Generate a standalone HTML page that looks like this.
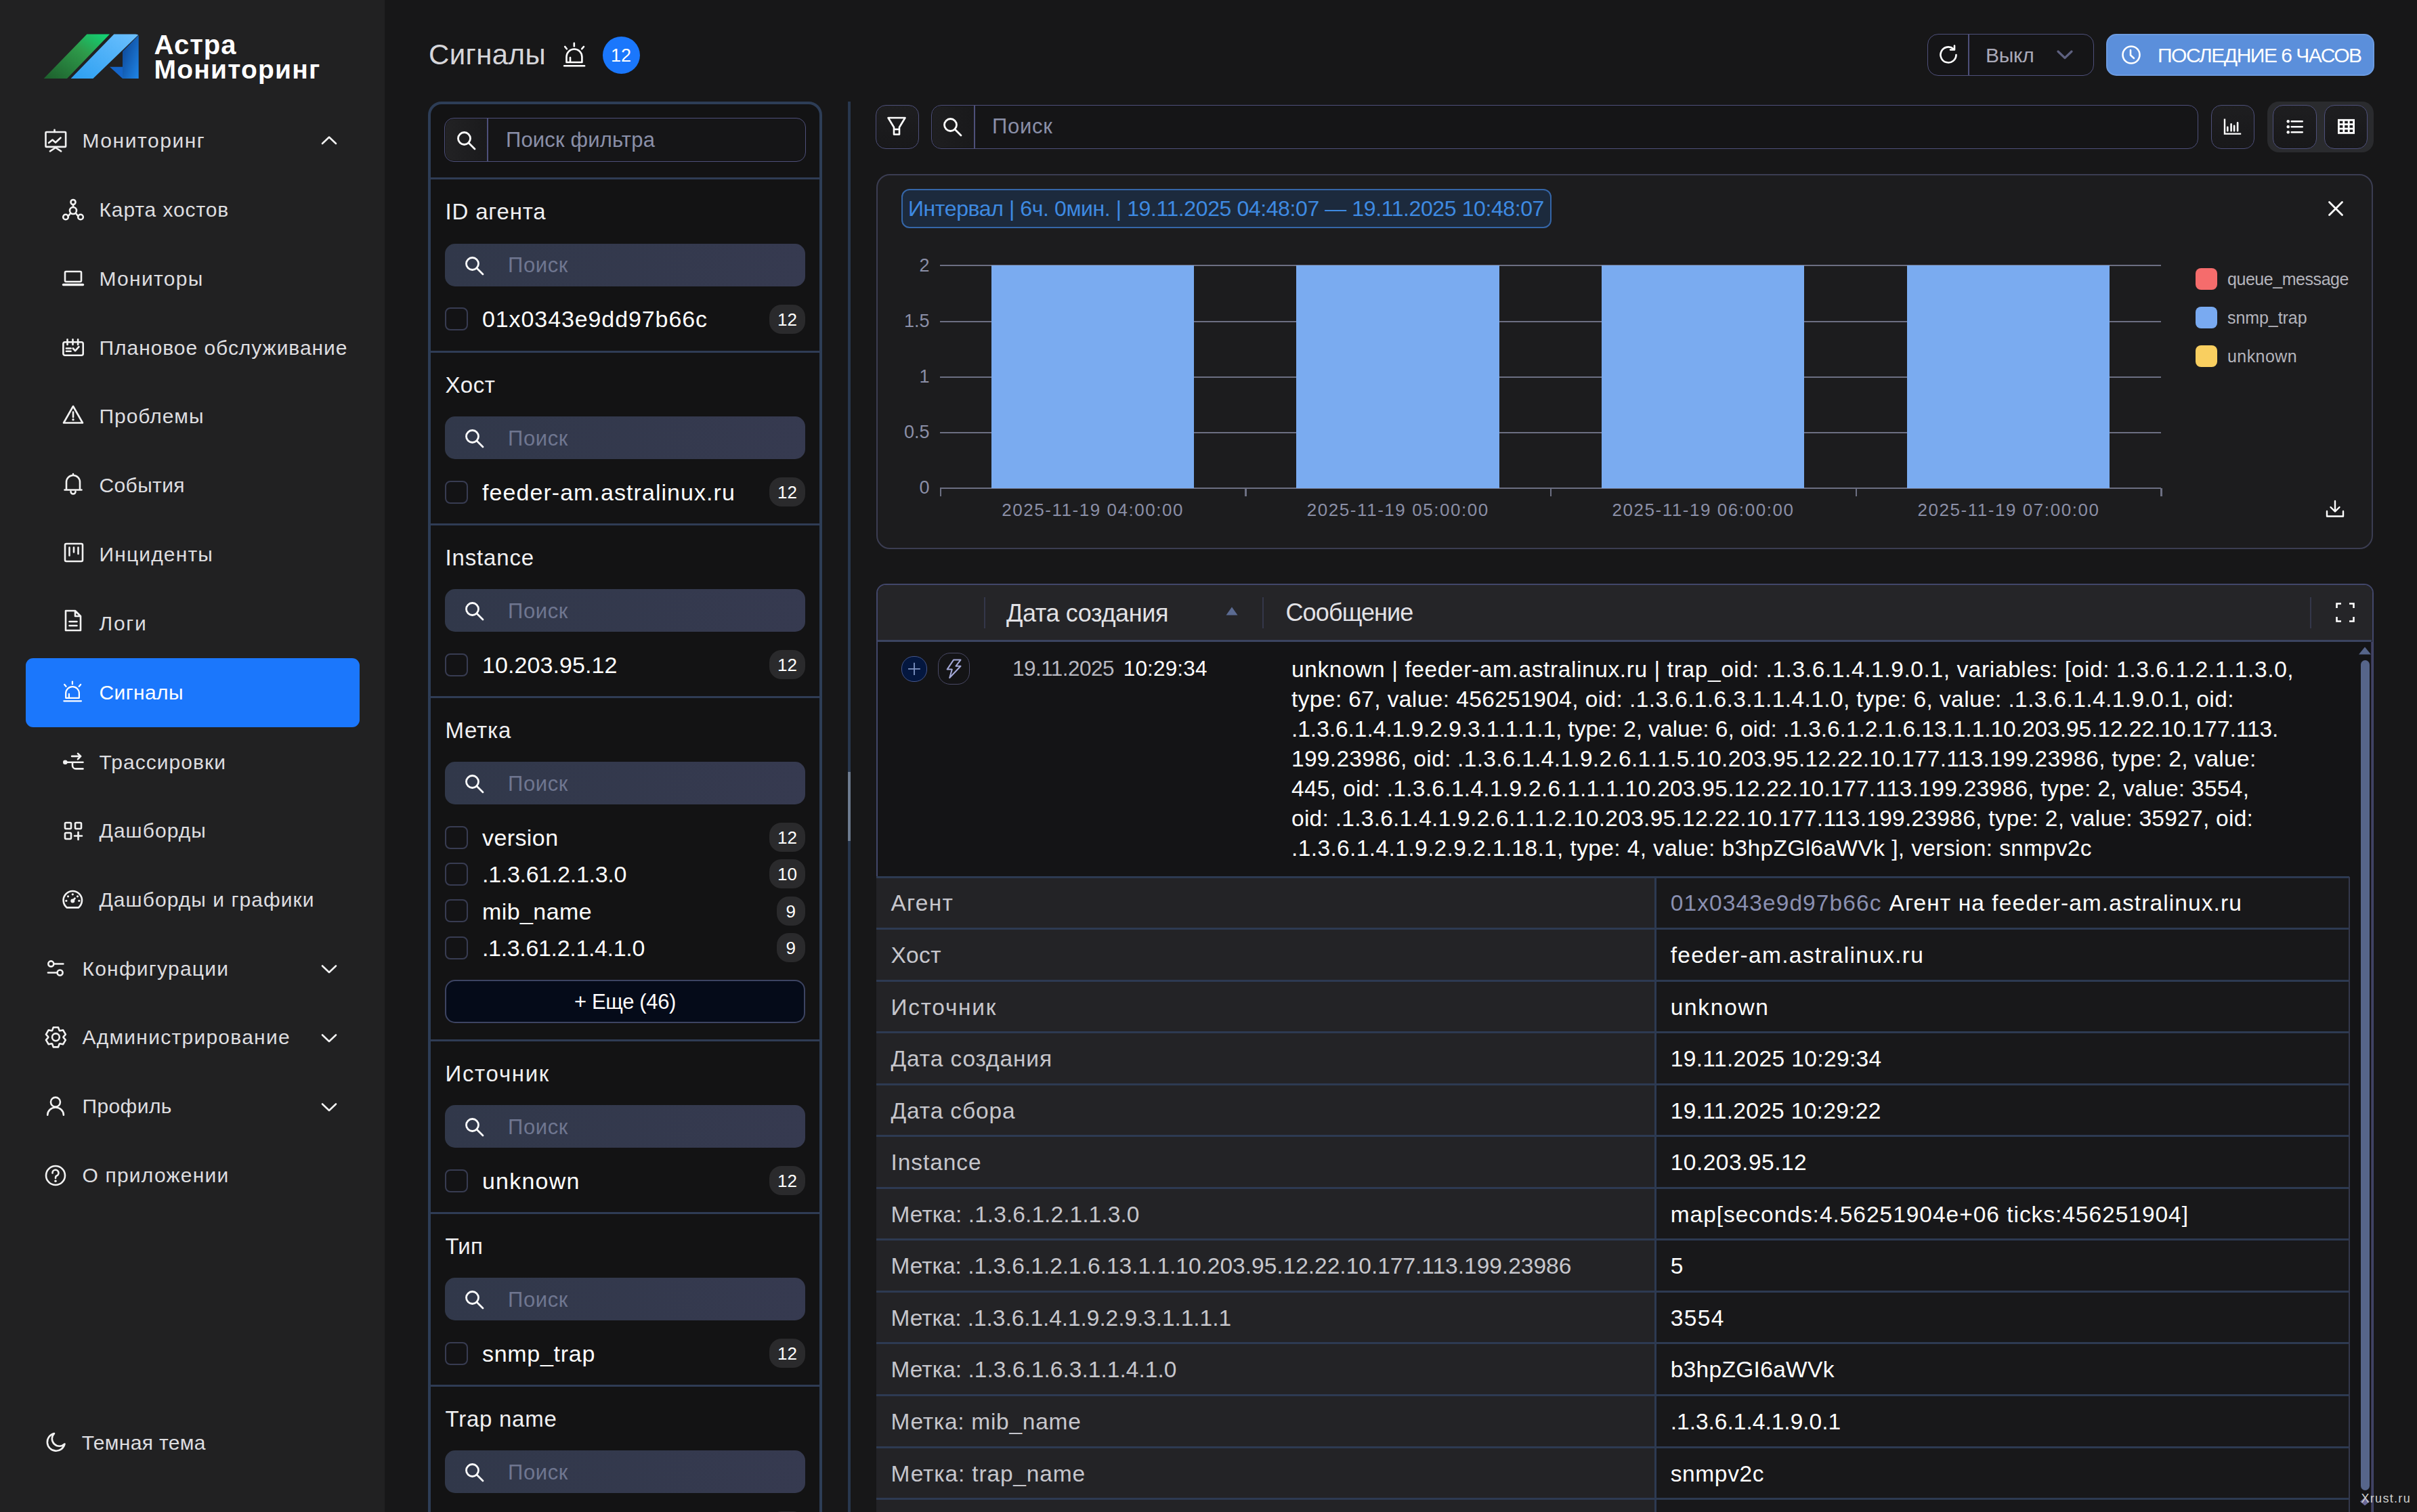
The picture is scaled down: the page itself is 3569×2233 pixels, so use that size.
<!DOCTYPE html>
<html><head><meta charset="utf-8"><style>
html,body{margin:0;padding:0;background:#171718;}
#root{position:relative;width:3569px;height:2233px;overflow:hidden;background:#171718;font-family:"Liberation Sans", sans-serif;}
.t{position:absolute;white-space:pre;line-height:1;font-family:"Liberation Sans", sans-serif;}
.r{position:absolute;box-sizing:border-box;}
svg.r{overflow:visible;}
</style></head><body><div id="root">
<div class="r" style="left:0.0px;top:0.0px;width:568.0px;height:2233.0px;background:#212122;"></div>
<svg class="r" style="left:60.0px;top:46.0px;" width="150" height="76" viewBox="0 0 150 76">
<defs>
<linearGradient id="lg1" x1="0" y1="1" x2="1" y2="0"><stop offset="0" stop-color="#1d5e2c"/><stop offset="0.6" stop-color="#2e9a4a"/><stop offset="1" stop-color="#10d878"/></linearGradient>
<linearGradient id="lg2" x1="0" y1="1" x2="1" y2="0"><stop offset="0" stop-color="#2c9ff0"/><stop offset="1" stop-color="#6cc0ff"/></linearGradient>
<linearGradient id="lg3" x1="0" y1="0" x2="1" y2="1"><stop offset="0" stop-color="#0b3f8c"/><stop offset="1" stop-color="#1f86e8"/></linearGradient>
</defs>
<path d="M4.6 70 L39 70 L102 4.5 Q100 4.5 97 4.5 L68.3 4.5 Z" fill="url(#lg1)"/>
<path d="M44.6 70 L77.4 70 L143.8 6 Q144 4.5 140 4.5 L108.3 4.5 Z" fill="url(#lg2)"/>
<path d="M121 70 L144.7 70 L144.7 6 L121 30 Z" fill="url(#lg3)"/>
<path d="M102 52.7 L121 52.7 L121 70 Z" fill="#1565c8"/>
</svg>
<div class="t" style="left:227.5px;top:46.2px;font-size:40px;color:#ffffff;font-weight:700;letter-spacing:1.02px">Астра</div>
<div class="t" style="left:227.5px;top:83.0px;font-size:39px;color:#ffffff;font-weight:700;letter-spacing:1.21px">Мониторинг</div>
<svg class="r" style="left:66.0px;top:190.0px;" width="34" height="36" viewBox="0 0 34 36"><g fill="none" stroke="#f2f2f2" stroke-width="2.6" stroke-linecap="round" stroke-linejoin="round"><rect x="1.5" y="5" width="29.6" height="21.9" rx="1"/><path d="M14.5 5 V1.8"/><path d="M7.9 33.3 L16 28 L24.2 33.3"/><path d="M6 21 L11.5 16.5 L16 20.5 L23.5 13.5"/></g></svg>
<div class="t" style="left:121.4px;top:192.6px;font-size:30px;color:#dedee0;font-weight:400;letter-spacing:1.56px">Мониторинг</div>
<svg class="r" style="left:474.0px;top:200.0px;" width="24" height="14" viewBox="0 0 24 14"><path d="M2 12 L12 2.5 L22 12" fill="none" stroke="#f2f2f2" stroke-width="2.6" stroke-linecap="round" stroke-linejoin="round" stroke-width="3"/></svg>
<svg class="r" style="left:92.0px;top:294.0px;" width="32" height="32" viewBox="0 0 32 32"><g fill="none" stroke="#f2f2f2" stroke-width="2.6" stroke-linecap="round" stroke-linejoin="round"><circle cx="16" cy="4.5" r="3.5"/><circle cx="16" cy="17" r="5"/><circle cx="5" cy="26.5" r="3.8"/><circle cx="27" cy="26.5" r="3.8"/><path d="M16 8 V12 M8.5 25.5 L12 21 M23.5 25.5 L20 21"/></g></svg>
<div class="t" style="left:146.5px;top:294.6px;font-size:30px;color:#dedee0;font-weight:400;letter-spacing:0.88px">Карта хостов</div>
<svg class="r" style="left:92.0px;top:398.0px;" width="32" height="26" viewBox="0 0 32 26"><g fill="none" stroke="#f2f2f2" stroke-width="2.6" stroke-linecap="round" stroke-linejoin="round"><rect x="4" y="3" width="24" height="15" rx="1.5"/><path d="M1.5 22.5 H30.5" stroke-width="3.4"/></g></svg>
<div class="t" style="left:146.5px;top:396.6px;font-size:30px;color:#dedee0;font-weight:400;letter-spacing:1.29px">Мониторы</div>
<svg class="r" style="left:92.0px;top:500.0px;" width="32" height="28" viewBox="0 0 32 28"><g fill="none" stroke="#f2f2f2" stroke-width="2.6" stroke-linecap="round" stroke-linejoin="round"><rect x="1.4" y="5.2" width="29.3" height="19.5" rx="2.5"/><path d="M7.5 1.2 V9 M15.5 1.2 V9 M23.1 1.2 V9 M5.9 14.5 H12.6 M5.9 18.8 H12.6 M15.8 14.5 L19.1 18.1 L24.4 12.2"/></g></svg>
<div class="t" style="left:146.5px;top:498.6px;font-size:30px;color:#dedee0;font-weight:400;letter-spacing:0.96px">Плановое обслуживание</div>
<svg class="r" style="left:92.0px;top:597.0px;" width="32" height="32" viewBox="0 0 32 32"><g fill="none" stroke="#f2f2f2" stroke-width="2.6" stroke-linecap="round" stroke-linejoin="round"><path d="M16 3 L30 27.5 H2 Z"/><path d="M16 11.5 V19"/><circle cx="16" cy="22.8" r="1.7" fill="#f2f2f2" stroke="none"/></g></svg>
<div class="t" style="left:146.5px;top:599.6px;font-size:30px;color:#dedee0;font-weight:400;letter-spacing:0.98px">Проблемы</div>
<svg class="r" style="left:94.0px;top:698.0px;" width="28" height="34" viewBox="0 0 28 34"><g fill="none" stroke="#f2f2f2" stroke-width="2.6" stroke-linecap="round" stroke-linejoin="round"><path d="M4 25 V14 A10 10 0 0 1 24 14 V25 M1.5 25.5 H26.5 M14 2 V4 M10.5 28 A3.5 3.5 0 0 0 17.5 28"/></g></svg>
<div class="t" style="left:146.5px;top:701.6px;font-size:30px;color:#dedee0;font-weight:400;letter-spacing:0.38px">События</div>
<svg class="r" style="left:94.0px;top:801.0px;" width="30" height="30" viewBox="0 0 30 30"><g fill="none" stroke="#f2f2f2" stroke-width="2.6" stroke-linecap="round" stroke-linejoin="round"><rect x="2" y="2" width="26" height="26" rx="2"/><path d="M8.5 7.5 V19.5 M15 7.5 V14.5 M21.5 7.5 V17"/></g></svg>
<div class="t" style="left:146.5px;top:803.6px;font-size:30px;color:#dedee0;font-weight:400;letter-spacing:1.15px">Инциденты</div>
<svg class="r" style="left:94.0px;top:900.0px;" width="28" height="34" viewBox="0 0 28 34"><g fill="none" stroke="#f2f2f2" stroke-width="2.6" stroke-linecap="round" stroke-linejoin="round"><path d="M3 2 H17 L25 10 V31 H3 Z M17 2 V10 H25 M8.5 18 H19.5 M8.5 24 H19.5"/></g></svg>
<div class="t" style="left:146.5px;top:905.6px;font-size:30px;color:#dedee0;font-weight:400;letter-spacing:1.73px">Логи</div>
<div class="r" style="left:38.0px;top:972.0px;width:493.0px;height:102.0px;background:#1b77fc;border-radius:11px;"></div>
<svg class="r" style="left:83.0px;top:999.0px;" width="50" height="45" viewBox="0 0 50 45"><g transform="scale(0.86)" fill="none" stroke="#ffffff" stroke-width="2.6" stroke-linecap="round" stroke-linejoin="round"><path d="M16.5 37 V29 A11.45 11.45 0 0 1 39.4 29 V37 Z"/><path d="M22 30 V36"/><path d="M13.2 42.2 H43"/><path d="M27.8 8.8 V13.2"/><path d="M14.2 13.9 L16.9 17.2"/><path d="M42 13.9 L39.2 17.2"/></g></svg>
<div class="t" style="left:146.5px;top:1008.1px;font-size:30px;color:#ffffff;font-weight:400;letter-spacing:0.40px">Сигналы</div>
<svg class="r" style="left:85.0px;top:1105.0px;" width="50" height="45" viewBox="0 0 50 45"><g fill="none" stroke="#f2f2f2" stroke-width="2.6" stroke-linecap="round" stroke-linejoin="round"><circle cx="11.3" cy="20.8" r="3.3" fill="#f2f2f2" stroke="none"/><path d="M12 20.8 H37.5 M21.1 11.9 H34 M30 7.9 L34.2 11.9 L30 16.2 M22 21 V25.4 A5 5 0 0 0 27 30.4 H37.5"/></g></svg>
<div class="t" style="left:146.5px;top:1110.6px;font-size:30px;color:#dedee0;font-weight:400;letter-spacing:1.05px">Трассировки</div>
<svg class="r" style="left:94.0px;top:1213.0px;" width="28" height="28" viewBox="0 0 28 28"><g fill="none" stroke="#f2f2f2" stroke-width="2.6" stroke-linecap="round" stroke-linejoin="round"><rect x="2" y="2" width="9" height="9" rx="1.5"/><rect x="17" y="2" width="9" height="9" rx="1.5"/><rect x="2" y="17" width="9" height="9" rx="1.5"/><path d="M21.5 16 V27 M16 21.5 H27"/></g></svg>
<div class="t" style="left:146.5px;top:1211.6px;font-size:30px;color:#dedee0;font-weight:400;letter-spacing:1.06px">Дашборды</div>
<svg class="r" style="left:85.0px;top:1305.0px;" width="50" height="45" viewBox="0 0 50 45"><g fill="none" stroke="#f2f2f2" stroke-width="2.6" stroke-linecap="round" stroke-linejoin="round"><path d="M13.75 35.4 H30.85 A13.7 13.7 0 1 0 13.75 35.4 Z"/><path d="M22.3 25.6 L25.6 21.7"/></g><g fill="#f2f2f2"><circle cx="22.3" cy="25.6" r="3"/><circle cx="22.3" cy="15.8" r="1.6"/><circle cx="15.5" cy="18.8" r="1.6"/><circle cx="29.5" cy="18.8" r="1.6"/><circle cx="12.8" cy="25.3" r="1.6"/><circle cx="31.8" cy="25.3" r="1.6"/></g></svg>
<div class="t" style="left:146.5px;top:1314.1px;font-size:30px;color:#dedee0;font-weight:400;letter-spacing:1.05px">Дашборды и графики</div>
<svg class="r" style="left:55.0px;top:1410.0px;" width="50" height="45" viewBox="0 0 50 45"><g fill="none" stroke="#f2f2f2" stroke-width="2.6" stroke-linecap="round" stroke-linejoin="round"><circle cx="20.3" cy="13.4" r="4"/><path d="M24.5 13.5 H38.4 M15.9 26.5 H29.4"/><circle cx="33.6" cy="26.5" r="4"/></g></svg>
<div class="t" style="left:121.4px;top:1415.6px;font-size:30px;color:#dedee0;font-weight:400;letter-spacing:1.26px">Конфигурации</div>
<svg class="r" style="left:474.0px;top:1424.0px;" width="24" height="14" viewBox="0 0 24 14"><path d="M2 2.5 L12 12 L22 2.5" fill="none" stroke="#f2f2f2" stroke-width="2.6" stroke-linecap="round" stroke-linejoin="round" stroke-width="3"/></svg>
<svg class="r" style="left:55.0px;top:1510.0px;" width="50" height="45" viewBox="0 0 50 45"><g fill="none" stroke="#f2f2f2" stroke-width="2.6" stroke-linejoin="round"><path d="M32.66 11.91 L31.03 7.25 L23.77 7.25 L22.14 11.91 L21.46 12.30 L16.61 11.38 L12.98 17.67 L16.21 21.41 L16.21 22.19 L12.98 25.93 L16.61 32.22 L21.46 31.30 L22.14 31.69 L23.77 36.35 L31.03 36.35 L32.66 31.69 L33.34 31.30 L38.19 32.22 L41.82 25.93 L38.59 22.19 L38.59 21.41 L41.82 17.67 L38.19 11.38 L33.34 12.30 Z"/><circle cx="27.4" cy="21.8" r="5.4"/></g></svg>
<div class="t" style="left:121.4px;top:1516.6px;font-size:30px;color:#dedee0;font-weight:400;letter-spacing:1.26px">Администрирование</div>
<svg class="r" style="left:474.0px;top:1526.0px;" width="24" height="14" viewBox="0 0 24 14"><path d="M2 2.5 L12 12 L22 2.5" fill="none" stroke="#f2f2f2" stroke-width="2.6" stroke-linecap="round" stroke-linejoin="round" stroke-width="3"/></svg>
<svg class="r" style="left:55.0px;top:1615.0px;" width="50" height="45" viewBox="0 0 50 45"><g fill="none" stroke="#f2f2f2" stroke-width="2.6" stroke-linecap="round" stroke-linejoin="round"><circle cx="26.95" cy="12.6" r="7"/><path d="M15.2 31.7 A11.85 11.2 0 0 1 38.9 31.7"/></g></svg>
<div class="t" style="left:121.4px;top:1618.6px;font-size:30px;color:#dedee0;font-weight:400;letter-spacing:0.43px">Профиль</div>
<svg class="r" style="left:474.0px;top:1628.0px;" width="24" height="14" viewBox="0 0 24 14"><path d="M2 2.5 L12 12 L22 2.5" fill="none" stroke="#f2f2f2" stroke-width="2.6" stroke-linecap="round" stroke-linejoin="round" stroke-width="3"/></svg>
<svg class="r" style="left:66.0px;top:1720.0px;" width="32" height="32" viewBox="0 0 32 32"><g fill="none" stroke="#f2f2f2" stroke-width="2.6" stroke-linecap="round" stroke-linejoin="round"><circle cx="16" cy="16" r="14"/><path d="M11.5 12.5 A4.5 4.5 0 1 1 17.5 16.5 Q16 17.3 16 19.5 V20"/><circle cx="16" cy="24.3" r="1.8" fill="#f2f2f2" stroke="none"/></g></svg>
<div class="t" style="left:121.4px;top:1720.6px;font-size:30px;color:#dedee0;font-weight:400;letter-spacing:1.22px">О приложении</div>
<svg class="r" style="left:66.0px;top:2114.0px;" width="32" height="32" viewBox="0 0 32 32"><g fill="none" stroke="#f2f2f2" stroke-width="2.6" stroke-linecap="round" stroke-linejoin="round"><path d="M14 3 A13 13 0 1 0 29.5 18.5 A10 10 0 0 1 14 3 Z"/></g></svg>
<div class="t" style="left:120.8px;top:2115.6px;font-size:30px;color:#dedee0;font-weight:400;letter-spacing:0.35px">Темная тема</div>
<div class="t" style="left:633.0px;top:60.0px;font-size:42px;color:#d6d6da;font-weight:400;letter-spacing:0.38px">Сигналы</div>
<svg class="r" style="left:820.0px;top:55.0px;" width="60" height="50" viewBox="0 0 60 50"><g transform="scale(1)" fill="none" stroke="#ffffff" stroke-width="2.6" stroke-linecap="round" stroke-linejoin="round"><path d="M16.5 37 V29 A11.45 11.45 0 0 1 39.4 29 V37 Z"/><path d="M22 30 V36"/><path d="M13.2 42.2 H43"/><path d="M27.8 8.8 V13.2"/><path d="M14.2 13.9 L16.9 17.2"/><path d="M42 13.9 L39.2 17.2"/></g></svg>
<div class="r" style="left:889.5px;top:53.5px;width:55.0px;height:55.0px;background:#1a77fc;border-radius:50%;"></div>
<div class="t" style="left:902.0px;top:68.6px;font-size:27px;color:#ffffff;font-weight:400;letter-spacing:0.00px">12</div>
<div class="r" style="left:2846.0px;top:50.0px;width:246.0px;height:61.5px;border:1.6px solid #4e507a;border-radius:16px;background:#151517;"></div>
<div class="r" style="left:2906.2px;top:51.0px;width:1.6px;height:59.5px;background:#4e507a;"></div>
<svg class="r" style="left:2861.0px;top:65.0px;" width="32" height="32" viewBox="0 0 32 32"><g fill="none" stroke="#ffffff" stroke-width="2.6" stroke-linecap="round" stroke-linejoin="round"><path d="M27.5 16 A11.5 11.5 0 1 1 23.5 7.2"/><path d="M25 2.5 L25 8.5 L19 8.5"/></g></svg>
<div class="t" style="left:2932.0px;top:66.6px;font-size:30px;color:#a9a9b8;font-weight:400;letter-spacing:-0.26px">Выкл</div>
<svg class="r" style="left:3036.0px;top:73.0px;" width="26" height="16" viewBox="0 0 26 16"><path d="M3 3 L13 12.5 L23 3" fill="none" stroke="#5e6180" stroke-width="3.2" stroke-linecap="round" stroke-linejoin="round"/></svg>
<div class="r" style="left:3110.0px;top:50.0px;width:395.5px;height:61.5px;background:#5b8fdb;border-radius:15px;border:2px solid #6c9be0;"></div>
<svg class="r" style="left:3131.0px;top:65.0px;" width="32" height="32" viewBox="0 0 32 32"><g fill="none" stroke="#ffffff" stroke-width="2.6" stroke-linecap="round"><circle cx="16" cy="16" r="12.5"/><path d="M15 9 V16.5 L20 21"/></g></svg>
<div class="t" style="left:3186.0px;top:66.9px;font-size:30px;color:#ffffff;font-weight:400;letter-spacing:-1.49px">ПОСЛЕДНИЕ 6 ЧАСОВ</div>
<div class="r" style="left:1293.0px;top:155.0px;width:63.5px;height:64.5px;border:1.6px solid #4e507a;border-radius:15px;background:linear-gradient(#1e1e20,#18181a);"></div>
<svg class="r" style="left:1308.0px;top:171.0px;" width="34" height="34" viewBox="0 0 34 34"><g fill="none" stroke="#ffffff" stroke-width="2.6" stroke-linejoin="round"><path d="M3.5 3 H28.5 L20 17 V27.5 H12 V17 Z"/><path d="M12 20 H20"/></g></svg>
<div class="r" style="left:1375.0px;top:155.0px;width:1871.0px;height:64.5px;border:1.6px solid #4e507a;border-radius:15px;background:#151517;"></div>
<div class="r" style="left:1377.0px;top:157.0px;width:62.0px;height:60.5px;background:linear-gradient(90deg,#1e1e20,#19191b);border-radius:13px 0 0 13px;"></div>
<div class="r" style="left:1438.2px;top:156.0px;width:1.6px;height:62.5px;background:#4e507a;"></div>
<svg class="r" style="left:1392.0px;top:173.0px;" width="30" height="30" viewBox="0 0 30 30"><g fill="none" stroke="#ffffff" stroke-width="2.8" stroke-linecap="round"><circle cx="11.5" cy="11.5" r="9"/><path d="M18 18 L27 27"/></g></svg>
<div class="t" style="left:1465.0px;top:171.4px;font-size:31px;color:#8a8fa8;font-weight:400;letter-spacing:0.72px">Поиск</div>
<div class="r" style="left:3264.5px;top:155.0px;width:64.5px;height:64.5px;border:1.6px solid #4e507a;border-radius:15px;background:linear-gradient(#1e1e20,#18181a);"></div>
<svg class="r" style="left:3280.0px;top:170.0px;" width="34" height="34" viewBox="0 0 34 34"><g fill="none" stroke="#ffffff" stroke-linecap="round"><path d="M5 5.4 V27.6 H29.2" stroke-width="2.4" stroke-linecap="butt"/><path d="M9.3 17.8 V23.2 M14.6 13.2 V23.2 M19.1 15.8 V23.2 M24.1 11.2 V23.2" stroke-width="2.6"/></g></svg>
<div class="r" style="left:3348.0px;top:149.5px;width:157.0px;height:75.0px;background:#2a2b2e;border-radius:17px;"></div>
<div class="r" style="left:3356.0px;top:155.0px;width:64.5px;height:64.5px;border:1.6px solid #4e507a;border-radius:15px;background:linear-gradient(#1e1e20,#18181a);"></div>
<svg class="r" style="left:3370.0px;top:170.0px;" width="34" height="34" viewBox="0 0 34 34"><g fill="#ffffff"><circle cx="8.7" cy="9.3" r="2.2"/><circle cx="8.7" cy="17.2" r="2.2"/><circle cx="8.7" cy="25.2" r="2.2"/></g><g stroke="#ffffff" stroke-width="2.4" stroke-linecap="round"><path d="M13.6 9.3 H29.8 M13.6 17.2 H29.8 M13.6 25.2 H29.8"/></g></svg>
<div class="r" style="left:3432.0px;top:155.0px;width:64.0px;height:64.5px;border:1.6px solid #4e507a;border-radius:15px;background:linear-gradient(#1e1e20,#18181a);"></div>
<svg class="r" style="left:3450.0px;top:174.0px;" width="30" height="26" viewBox="0 0 30 26"><g fill="none" stroke="#ffffff" stroke-width="2.8"><rect x="3.4" y="3.3" width="22.2" height="19.1"/><path d="M3.4 9.7 H25.6 M3.4 16.1 H25.6 M10.8 3.3 V22.4 M18.2 3.3 V22.4"/></g></svg>
<div class="r" style="left:632.0px;top:149.5px;width:582.0px;height:2150.5px;border:4px solid #2d3d56;border-radius:20px;background:#131314;"></div>
<div class="r" style="left:656.0px;top:174.0px;width:534.0px;height:65.0px;border:1.6px solid #4e507a;border-radius:14px;background:#151517;"></div>
<div class="r" style="left:658.0px;top:176.0px;width:62.0px;height:61.0px;background:linear-gradient(90deg,#222224,#1a1a1c);border-radius:12px 0 0 12px;"></div>
<div class="r" style="left:719.2px;top:175.0px;width:1.6px;height:63.0px;background:#4e507a;"></div>
<svg class="r" style="left:674.0px;top:193.0px;" width="30" height="30" viewBox="0 0 30 30"><g fill="none" stroke="#ffffff" stroke-width="2.8" stroke-linecap="round"><circle cx="11.5" cy="11.5" r="9"/><path d="M18 18 L27 27"/></g></svg>
<div class="t" style="left:747.0px;top:190.8px;font-size:31px;color:#8a8fa8;font-weight:400;letter-spacing:0.17px">Поиск фильтра</div>
<div class="r" style="left:635.0px;top:262.0px;width:576.0px;height:3.0px;background:#2f3c55;"></div>
<div class="t" style="left:657.5px;top:296.3px;font-size:33px;color:#f0f0f2;font-weight:400;letter-spacing:0.83px">ID агента</div>
<div class="r" style="left:657.0px;top:359.5px;width:532.0px;height:63.0px;background:linear-gradient(90deg,#31384a,#363a50);border-radius:15px;"></div>
<svg class="r" style="left:686.0px;top:377.5px;" width="30" height="30" viewBox="0 0 30 30"><g fill="none" stroke="#ffffff" stroke-width="2.8" stroke-linecap="round"><circle cx="11.5" cy="11.5" r="9"/><path d="M18 18 L27 27"/></g></svg>
<div class="t" style="left:750.0px;top:376.1px;font-size:31px;color:#6f7690;font-weight:400;letter-spacing:0.62px">Поиск</div>
<div class="r" style="left:657.0px;top:454.0px;width:34.0px;height:34.0px;border:2px solid #383c52;border-radius:8px;background:#131315;"></div>
<div class="t" style="left:712.0px;top:454.2px;font-size:34px;color:#ffffff;font-weight:400;letter-spacing:0.90px">01x0343e9dd97b66c</div>
<div class="r" style="left:1136.0px;top:449.5px;width:53.0px;height:43.0px;background:#2a2a2c;border-radius:18px;"></div>
<div class="t" style="left:1148.0px;top:458.5px;font-size:26px;color:#ffffff;font-weight:400;letter-spacing:0.00px">12</div>
<div class="r" style="left:635.0px;top:517.5px;width:576.0px;height:3.0px;background:#2f3c55;"></div>
<div class="t" style="left:657.5px;top:551.8px;font-size:33px;color:#f0f0f2;font-weight:400;letter-spacing:0.60px">Хост</div>
<div class="r" style="left:657.0px;top:615.0px;width:532.0px;height:63.0px;background:linear-gradient(90deg,#31384a,#363a50);border-radius:15px;"></div>
<svg class="r" style="left:686.0px;top:633.0px;" width="30" height="30" viewBox="0 0 30 30"><g fill="none" stroke="#ffffff" stroke-width="2.8" stroke-linecap="round"><circle cx="11.5" cy="11.5" r="9"/><path d="M18 18 L27 27"/></g></svg>
<div class="t" style="left:750.0px;top:631.6px;font-size:31px;color:#6f7690;font-weight:400;letter-spacing:0.62px">Поиск</div>
<div class="r" style="left:657.0px;top:709.5px;width:34.0px;height:34.0px;border:2px solid #383c52;border-radius:8px;background:#131315;"></div>
<div class="t" style="left:712.0px;top:709.7px;font-size:34px;color:#ffffff;font-weight:400;letter-spacing:1.06px">feeder-am.astralinux.ru</div>
<div class="r" style="left:1136.0px;top:705.0px;width:53.0px;height:43.0px;background:#2a2a2c;border-radius:18px;"></div>
<div class="t" style="left:1148.0px;top:714.0px;font-size:26px;color:#ffffff;font-weight:400;letter-spacing:0.00px">12</div>
<div class="r" style="left:635.0px;top:772.5px;width:576.0px;height:3.0px;background:#2f3c55;"></div>
<div class="t" style="left:657.5px;top:806.8px;font-size:33px;color:#f0f0f2;font-weight:400;letter-spacing:0.84px">Instance</div>
<div class="r" style="left:657.0px;top:870.0px;width:532.0px;height:63.0px;background:linear-gradient(90deg,#31384a,#363a50);border-radius:15px;"></div>
<svg class="r" style="left:686.0px;top:888.0px;" width="30" height="30" viewBox="0 0 30 30"><g fill="none" stroke="#ffffff" stroke-width="2.8" stroke-linecap="round"><circle cx="11.5" cy="11.5" r="9"/><path d="M18 18 L27 27"/></g></svg>
<div class="t" style="left:750.0px;top:886.6px;font-size:31px;color:#6f7690;font-weight:400;letter-spacing:0.62px">Поиск</div>
<div class="r" style="left:657.0px;top:964.5px;width:34.0px;height:34.0px;border:2px solid #383c52;border-radius:8px;background:#131315;"></div>
<div class="t" style="left:712.0px;top:964.7px;font-size:34px;color:#ffffff;font-weight:400;letter-spacing:0.08px">10.203.95.12</div>
<div class="r" style="left:1136.0px;top:960.0px;width:53.0px;height:43.0px;background:#2a2a2c;border-radius:18px;"></div>
<div class="t" style="left:1148.0px;top:969.0px;font-size:26px;color:#ffffff;font-weight:400;letter-spacing:0.00px">12</div>
<div class="r" style="left:635.0px;top:1027.5px;width:576.0px;height:3.0px;background:#2f3c55;"></div>
<div class="t" style="left:657.5px;top:1061.8px;font-size:33px;color:#f0f0f2;font-weight:400;letter-spacing:0.75px">Метка</div>
<div class="r" style="left:657.0px;top:1125.0px;width:532.0px;height:63.0px;background:linear-gradient(90deg,#31384a,#363a50);border-radius:15px;"></div>
<svg class="r" style="left:686.0px;top:1143.0px;" width="30" height="30" viewBox="0 0 30 30"><g fill="none" stroke="#ffffff" stroke-width="2.8" stroke-linecap="round"><circle cx="11.5" cy="11.5" r="9"/><path d="M18 18 L27 27"/></g></svg>
<div class="t" style="left:750.0px;top:1141.6px;font-size:31px;color:#6f7690;font-weight:400;letter-spacing:0.62px">Поиск</div>
<div class="r" style="left:657.0px;top:1219.5px;width:34.0px;height:34.0px;border:2px solid #383c52;border-radius:8px;background:#131315;"></div>
<div class="t" style="left:712.0px;top:1219.7px;font-size:34px;color:#ffffff;font-weight:400;letter-spacing:0.41px">version</div>
<div class="r" style="left:1136.0px;top:1215.0px;width:53.0px;height:43.0px;background:#2a2a2c;border-radius:18px;"></div>
<div class="t" style="left:1148.0px;top:1224.0px;font-size:26px;color:#ffffff;font-weight:400;letter-spacing:0.00px">12</div>
<div class="r" style="left:657.0px;top:1273.9px;width:34.0px;height:34.0px;border:2px solid #383c52;border-radius:8px;background:#131315;"></div>
<div class="t" style="left:712.0px;top:1274.1px;font-size:34px;color:#ffffff;font-weight:400;letter-spacing:-0.29px">.1.3.61.2.1.3.0</div>
<div class="r" style="left:1136.0px;top:1269.4px;width:53.0px;height:43.0px;background:#2a2a2c;border-radius:18px;"></div>
<div class="t" style="left:1148.0px;top:1278.4px;font-size:26px;color:#ffffff;font-weight:400;letter-spacing:0.00px">10</div>
<div class="r" style="left:657.0px;top:1328.3px;width:34.0px;height:34.0px;border:2px solid #383c52;border-radius:8px;background:#131315;"></div>
<div class="t" style="left:712.0px;top:1328.5px;font-size:34px;color:#ffffff;font-weight:400;letter-spacing:0.41px">mib_name</div>
<div class="r" style="left:1147.0px;top:1323.8px;width:42.0px;height:43.0px;background:#2a2a2c;border-radius:18px;"></div>
<div class="t" style="left:1160.5px;top:1332.8px;font-size:26px;color:#ffffff;font-weight:400;letter-spacing:0.00px">9</div>
<div class="r" style="left:657.0px;top:1382.7px;width:34.0px;height:34.0px;border:2px solid #383c52;border-radius:8px;background:#131315;"></div>
<div class="t" style="left:712.0px;top:1382.9px;font-size:34px;color:#ffffff;font-weight:400;letter-spacing:-0.34px">.1.3.61.2.1.4.1.0</div>
<div class="r" style="left:1147.0px;top:1378.2px;width:42.0px;height:43.0px;background:#2a2a2c;border-radius:18px;"></div>
<div class="t" style="left:1160.5px;top:1387.2px;font-size:26px;color:#ffffff;font-weight:400;letter-spacing:0.00px">9</div>
<div class="r" style="left:656.5px;top:1447.0px;width:532.5px;height:64.0px;border:2px solid #3d4462;border-radius:15px;background:#050b19;"></div>
<div class="t" style="left:848.0px;top:1463.6px;font-size:31px;color:#ffffff;font-weight:400;letter-spacing:-0.35px">+ Еще (46)</div>
<div class="r" style="left:635.0px;top:1534.5px;width:576.0px;height:3.0px;background:#2f3c55;"></div>
<div class="t" style="left:657.5px;top:1568.8px;font-size:33px;color:#f0f0f2;font-weight:400;letter-spacing:1.70px">Источник</div>
<div class="r" style="left:657.0px;top:1632.0px;width:532.0px;height:63.0px;background:linear-gradient(90deg,#31384a,#363a50);border-radius:15px;"></div>
<svg class="r" style="left:686.0px;top:1650.0px;" width="30" height="30" viewBox="0 0 30 30"><g fill="none" stroke="#ffffff" stroke-width="2.8" stroke-linecap="round"><circle cx="11.5" cy="11.5" r="9"/><path d="M18 18 L27 27"/></g></svg>
<div class="t" style="left:750.0px;top:1648.6px;font-size:31px;color:#6f7690;font-weight:400;letter-spacing:0.62px">Поиск</div>
<div class="r" style="left:657.0px;top:1726.5px;width:34.0px;height:34.0px;border:2px solid #383c52;border-radius:8px;background:#131315;"></div>
<div class="t" style="left:712.0px;top:1726.7px;font-size:34px;color:#ffffff;font-weight:400;letter-spacing:1.20px">unknown</div>
<div class="r" style="left:1136.0px;top:1722.0px;width:53.0px;height:43.0px;background:#2a2a2c;border-radius:18px;"></div>
<div class="t" style="left:1148.0px;top:1731.0px;font-size:26px;color:#ffffff;font-weight:400;letter-spacing:0.00px">12</div>
<div class="r" style="left:635.0px;top:1789.5px;width:576.0px;height:3.0px;background:#2f3c55;"></div>
<div class="t" style="left:657.5px;top:1823.8px;font-size:33px;color:#f0f0f2;font-weight:400;letter-spacing:0.16px">Тип</div>
<div class="r" style="left:657.0px;top:1887.0px;width:532.0px;height:63.0px;background:linear-gradient(90deg,#31384a,#363a50);border-radius:15px;"></div>
<svg class="r" style="left:686.0px;top:1905.0px;" width="30" height="30" viewBox="0 0 30 30"><g fill="none" stroke="#ffffff" stroke-width="2.8" stroke-linecap="round"><circle cx="11.5" cy="11.5" r="9"/><path d="M18 18 L27 27"/></g></svg>
<div class="t" style="left:750.0px;top:1903.6px;font-size:31px;color:#6f7690;font-weight:400;letter-spacing:0.62px">Поиск</div>
<div class="r" style="left:657.0px;top:1981.5px;width:34.0px;height:34.0px;border:2px solid #383c52;border-radius:8px;background:#131315;"></div>
<div class="t" style="left:712.0px;top:1981.7px;font-size:34px;color:#ffffff;font-weight:400;letter-spacing:0.71px">snmp_trap</div>
<div class="r" style="left:1136.0px;top:1977.0px;width:53.0px;height:43.0px;background:#2a2a2c;border-radius:18px;"></div>
<div class="t" style="left:1148.0px;top:1986.0px;font-size:26px;color:#ffffff;font-weight:400;letter-spacing:0.00px">12</div>
<div class="r" style="left:635.0px;top:2044.5px;width:576.0px;height:3.0px;background:#2f3c55;"></div>
<div class="t" style="left:657.5px;top:2078.8px;font-size:33px;color:#f0f0f2;font-weight:400;letter-spacing:0.74px">Trap name</div>
<div class="r" style="left:657.0px;top:2142.0px;width:532.0px;height:63.0px;background:linear-gradient(90deg,#31384a,#363a50);border-radius:15px;"></div>
<svg class="r" style="left:686.0px;top:2160.0px;" width="30" height="30" viewBox="0 0 30 30"><g fill="none" stroke="#ffffff" stroke-width="2.8" stroke-linecap="round"><circle cx="11.5" cy="11.5" r="9"/><path d="M18 18 L27 27"/></g></svg>
<div class="t" style="left:750.0px;top:2158.6px;font-size:31px;color:#6f7690;font-weight:400;letter-spacing:0.62px">Поиск</div>
<div class="r" style="left:657.0px;top:2236.5px;width:34.0px;height:34.0px;border:2px solid #383c52;border-radius:8px;background:#131315;"></div>
<div class="t" style="left:712.0px;top:2236.7px;font-size:34px;color:#ffffff;font-weight:400;letter-spacing:0.00px">xxx</div>
<div class="r" style="left:1136.0px;top:2232.0px;width:53.0px;height:43.0px;background:#2a2a2c;border-radius:18px;"></div>
<div class="t" style="left:1148.0px;top:2241.0px;font-size:26px;color:#ffffff;font-weight:400;letter-spacing:0.00px">12</div>
<div class="r" style="left:1252.0px;top:150.0px;width:3.5px;height:2083.0px;background:#28374d;"></div>
<div class="r" style="left:1252.0px;top:1140.0px;width:3.5px;height:102.0px;background:#6c7a8e;"></div>
<div class="r" style="left:1293.5px;top:257.0px;width:2210.5px;height:554.0px;border:2px solid #3b3d52;border-radius:20px;background:#1c1c1e;"></div>
<div class="r" style="left:1331.0px;top:279.0px;width:959.5px;height:57.5px;border:2px solid #3566a8;border-radius:12px;background:#1c2a3d;"></div>
<div class="t" style="left:1341.0px;top:291.6px;font-size:32px;color:#3e8ae2;font-weight:400;letter-spacing:-0.40px">Интервал | 6ч. 0мин. | 19.11.2025 04:48:07 — 19.11.2025 10:48:07</div>
<svg class="r" style="left:3437.0px;top:296.0px;" width="24" height="24" viewBox="0 0 24 24"><path d="M2.5 2.5 L21.5 21.5 M21.5 2.5 L2.5 21.5" stroke="#ffffff" stroke-width="2.8" stroke-linecap="round"/></svg>
<div class="r" style="left:1388.0px;top:391.2px;width:1803.0px;height:2.0px;background:#6c6f82;"></div>
<div class="t" style="right:2196.5px;top:378.8px;font-size:27px;color:#8b8fa7;font-weight:400;letter-spacing:0.00px">2</div>
<div class="r" style="left:1388.0px;top:473.5px;width:1803.0px;height:2.0px;background:#6c6f82;"></div>
<div class="t" style="right:2196.5px;top:461.1px;font-size:27px;color:#8b8fa7;font-weight:400;letter-spacing:0.00px">1.5</div>
<div class="r" style="left:1388.0px;top:555.7px;width:1803.0px;height:2.0px;background:#6c6f82;"></div>
<div class="t" style="right:2196.5px;top:543.3px;font-size:27px;color:#8b8fa7;font-weight:400;letter-spacing:0.00px">1</div>
<div class="r" style="left:1388.0px;top:637.7px;width:1803.0px;height:2.0px;background:#6c6f82;"></div>
<div class="t" style="right:2196.5px;top:625.3px;font-size:27px;color:#8b8fa7;font-weight:400;letter-spacing:0.00px">0.5</div>
<div class="r" style="left:1388.0px;top:719.8px;width:1803.0px;height:2.0px;background:#6c6f82;"></div>
<div class="t" style="right:2196.5px;top:707.4px;font-size:27px;color:#8b8fa7;font-weight:400;letter-spacing:0.00px">0</div>
<div class="r" style="left:1463.7px;top:392.2px;width:299.3px;height:328.6px;background:#7aabf0;"></div>
<div class="r" style="left:1914.3px;top:392.2px;width:299.3px;height:328.6px;background:#7aabf0;"></div>
<div class="r" style="left:2365.0px;top:392.2px;width:299.3px;height:328.6px;background:#7aabf0;"></div>
<div class="r" style="left:2816.0px;top:392.2px;width:299.3px;height:328.6px;background:#7aabf0;"></div>
<div class="r" style="left:1387.8px;top:720.8px;width:2.4px;height:12.2px;background:#6c6f82;"></div>
<div class="r" style="left:1838.2px;top:720.8px;width:2.4px;height:12.2px;background:#6c6f82;"></div>
<div class="r" style="left:2288.8px;top:720.8px;width:2.4px;height:12.2px;background:#6c6f82;"></div>
<div class="r" style="left:2739.5px;top:720.8px;width:2.4px;height:12.2px;background:#6c6f82;"></div>
<div class="r" style="left:3190.3px;top:720.8px;width:2.4px;height:12.2px;background:#6c6f82;"></div>
<div class="t" style="left:1479.2px;top:740.0px;font-size:26px;color:#8b8fa7;font-weight:400;letter-spacing:1.55px">2025-11-19 04:00:00</div>
<div class="t" style="left:1929.8px;top:740.0px;font-size:26px;color:#8b8fa7;font-weight:400;letter-spacing:1.55px">2025-11-19 05:00:00</div>
<div class="t" style="left:2380.5px;top:740.0px;font-size:26px;color:#8b8fa7;font-weight:400;letter-spacing:1.55px">2025-11-19 06:00:00</div>
<div class="t" style="left:2831.5px;top:740.0px;font-size:26px;color:#8b8fa7;font-weight:400;letter-spacing:1.55px">2025-11-19 07:00:00</div>
<div class="r" style="left:3242.0px;top:396.0px;width:31.5px;height:31.5px;background:#f56c6c;border-radius:8px;"></div>
<div class="t" style="left:3289.0px;top:400.3px;font-size:25px;color:#b4b4bc;font-weight:400;letter-spacing:-0.45px">queue_message</div>
<div class="r" style="left:3242.0px;top:453.0px;width:31.5px;height:31.5px;background:#79aaf1;border-radius:8px;"></div>
<div class="t" style="left:3289.0px;top:457.3px;font-size:25px;color:#b4b4bc;font-weight:400;letter-spacing:-0.07px">snmp_trap</div>
<div class="r" style="left:3242.0px;top:510.0px;width:31.5px;height:31.5px;background:#f9cf60;border-radius:8px;"></div>
<div class="t" style="left:3289.0px;top:514.3px;font-size:25px;color:#b4b4bc;font-weight:400;letter-spacing:0.42px">unknown</div>
<svg class="r" style="left:3433.0px;top:738.0px;" width="30" height="28" viewBox="0 0 30 28"><g fill="none" stroke="#ffffff" stroke-width="2.4" stroke-linecap="round" stroke-linejoin="round"><path d="M15 2 V17 M8.5 11 L15 17.5 L21.5 11 M3 17 V24.5 H27 V17"/></g></svg>
<div class="r" style="left:1293.5px;top:862.0px;width:2211.0px;height:1538.0px;border:2px solid #42476a;border-radius:14px;background:#141416;"></div>
<div class="r" style="left:1295.5px;top:864.0px;width:2207.0px;height:82.0px;background:#252528;border-radius:12px 12px 0 0;"></div>
<div class="r" style="left:1295.5px;top:945.0px;width:2206.5px;height:3.0px;background:#3b4460;"></div>
<div class="r" style="left:1453.0px;top:882.0px;width:2.0px;height:46.0px;background:#34374a;"></div>
<div class="r" style="left:1863.6px;top:882.0px;width:2.0px;height:46.0px;background:#34374a;"></div>
<div class="r" style="left:3411.0px;top:882.0px;width:2.0px;height:46.0px;background:#34374a;"></div>
<div class="t" style="left:1486.0px;top:887.5px;font-size:36px;color:#e2e2e6;font-weight:400;letter-spacing:-0.38px">Дата создания</div>
<svg class="r" style="left:1810.0px;top:896.0px;" width="18" height="13" viewBox="0 0 18 13"><path d="M9 0.5 L17.5 12.5 H0.5 Z" fill="#5b6b92"/></svg>
<div class="t" style="left:1898.5px;top:887.0px;font-size:36px;color:#e2e2e6;font-weight:400;letter-spacing:-0.88px">Сообщение</div>
<svg class="r" style="left:3449.0px;top:890.0px;" width="28" height="29" viewBox="0 0 28 29"><g fill="none" stroke="#ffffff" stroke-width="2.6"><path d="M1.5 8 V1.5 H8 M20 1.5 H26.5 V8 M26.5 21 V27.5 H20 M8 27.5 H1.5 V21"/></g></svg>
<div class="r" style="left:1331.0px;top:969.0px;width:38.0px;height:38.0px;border:1.6px solid #46578c;border-radius:18px;background:#04173f;"></div>
<svg class="r" style="left:1340.0px;top:978.0px;" width="20" height="20" viewBox="0 0 20 20"><path d="M10 0.8 V18.9 M1 9.8 H18.8" stroke="#7f95c4" stroke-width="1.8"/></svg>
<div class="r" style="left:1385.0px;top:964.0px;width:46.7px;height:47.4px;border:1.6px solid #4a4a66;border-radius:18px;background:#141416;"></div>
<svg class="r" style="left:1395.0px;top:970.0px;" width="30" height="36" viewBox="0 0 30 36"><path d="M13 4.6 H23.5 L16.5 13.7 H23.5 L7.2 31 L10.8 18.6 H3.6 Z" fill="none" stroke="#a4a9d8" stroke-width="2" stroke-linejoin="round"/></svg>
<div class="t" style="left:1495.0px;top:972.1px;font-size:31.5px;color:#b8b8c0;font-weight:400;letter-spacing:-0.53px">19.11.2025</div>
<div class="t" style="left:1658.7px;top:972.1px;font-size:31.5px;color:#ffffff;font-weight:400;letter-spacing:0.17px">10:29:34</div>
<div class="t" style="left:1907.0px;top:972.1px;font-size:33.5px;color:#ffffff;font-weight:400;letter-spacing:0.60px">unknown | feeder-am.astralinux.ru | trap_oid: .1.3.6.1.4.1.9.0.1, variables: [oid: 1.3.6.1.2.1.1.3.0,</div>
<div class="t" style="left:1907.0px;top:1016.1px;font-size:33.5px;color:#ffffff;font-weight:400;letter-spacing:0.39px">type: 67, value: 456251904, oid: .1.3.6.1.6.3.1.1.4.1.0, type: 6, value: .1.3.6.1.4.1.9.0.1, oid:</div>
<div class="t" style="left:1907.0px;top:1060.1px;font-size:33.5px;color:#ffffff;font-weight:400;letter-spacing:-0.04px">.1.3.6.1.4.1.9.2.9.3.1.1.1.1, type: 2, value: 6, oid: .1.3.6.1.2.1.6.13.1.1.10.203.95.12.22.10.177.113.</div>
<div class="t" style="left:1907.0px;top:1104.1px;font-size:33.5px;color:#ffffff;font-weight:400;letter-spacing:0.30px">199.23986, oid: .1.3.6.1.4.1.9.2.6.1.1.5.10.203.95.12.22.10.177.113.199.23986, type: 2, value:</div>
<div class="t" style="left:1907.0px;top:1148.1px;font-size:33.5px;color:#ffffff;font-weight:400;letter-spacing:0.29px">445, oid: .1.3.6.1.4.1.9.2.6.1.1.1.10.203.95.12.22.10.177.113.199.23986, type: 2, value: 3554,</div>
<div class="t" style="left:1907.0px;top:1192.1px;font-size:33.5px;color:#ffffff;font-weight:400;letter-spacing:0.27px">oid: .1.3.6.1.4.1.9.2.6.1.1.2.10.203.95.12.22.10.177.113.199.23986, type: 2, value: 35927, oid:</div>
<div class="t" style="left:1907.0px;top:1236.1px;font-size:33.5px;color:#ffffff;font-weight:400;letter-spacing:0.38px">.1.3.6.1.4.1.9.2.9.2.1.18.1, type: 4, value: b3hpZGl6aWVk ], version: snmpv2c</div>
<div class="r" style="left:1294.0px;top:1295.0px;width:1150.0px;height:76.5px;background:#232326;"></div>
<div class="r" style="left:2444.0px;top:1295.0px;width:1025.0px;height:76.5px;background:#18181a;"></div>
<div class="t" style="left:1315.5px;top:1317.4px;font-size:33.5px;color:#c6c6cc;font-weight:400;letter-spacing:1.24px">Агент</div>
<div class="t" style="left:2466.7px;top:1317.4px;font-size:33.5px;color:#8a90b2;font-weight:400;letter-spacing:1.10px">01x0343e9d97b66c</div>
<div class="t" style="left:2789.5px;top:1317.4px;font-size:33.5px;color:#ffffff;font-weight:400;letter-spacing:1.09px">Агент на feeder-am.astralinux.ru</div>
<div class="r" style="left:1294.0px;top:1371.5px;width:1150.0px;height:76.5px;background:#232326;"></div>
<div class="r" style="left:2444.0px;top:1371.5px;width:1025.0px;height:76.5px;background:#18181a;"></div>
<div class="t" style="left:1315.5px;top:1394.0px;font-size:33.5px;color:#c6c6cc;font-weight:400;letter-spacing:0.45px">Хост</div>
<div class="t" style="left:2466.7px;top:1394.0px;font-size:33.5px;color:#ffffff;font-weight:400;letter-spacing:1.31px">feeder-am.astralinux.ru</div>
<div class="r" style="left:1294.0px;top:1448.1px;width:1150.0px;height:76.5px;background:#232326;"></div>
<div class="r" style="left:2444.0px;top:1448.1px;width:1025.0px;height:76.5px;background:#18181a;"></div>
<div class="t" style="left:1315.5px;top:1470.5px;font-size:33.5px;color:#c6c6cc;font-weight:400;letter-spacing:1.69px">Источник</div>
<div class="t" style="left:2466.7px;top:1470.5px;font-size:33.5px;color:#ffffff;font-weight:400;letter-spacing:1.70px">unknown</div>
<div class="r" style="left:1294.0px;top:1524.7px;width:1150.0px;height:76.5px;background:#232326;"></div>
<div class="r" style="left:2444.0px;top:1524.7px;width:1025.0px;height:76.5px;background:#18181a;"></div>
<div class="t" style="left:1315.5px;top:1547.1px;font-size:33.5px;color:#c6c6cc;font-weight:400;letter-spacing:0.88px">Дата создания</div>
<div class="t" style="left:2466.7px;top:1547.1px;font-size:33.5px;color:#ffffff;font-weight:400;letter-spacing:0.37px">19.11.2025 10:29:34</div>
<div class="r" style="left:1294.0px;top:1601.2px;width:1150.0px;height:76.5px;background:#232326;"></div>
<div class="r" style="left:2444.0px;top:1601.2px;width:1025.0px;height:76.5px;background:#18181a;"></div>
<div class="t" style="left:1315.5px;top:1623.6px;font-size:33.5px;color:#c6c6cc;font-weight:400;letter-spacing:0.87px">Дата сбора</div>
<div class="t" style="left:2466.7px;top:1623.6px;font-size:33.5px;color:#ffffff;font-weight:400;letter-spacing:0.32px">19.11.2025 10:29:22</div>
<div class="r" style="left:1294.0px;top:1677.8px;width:1150.0px;height:76.5px;background:#232326;"></div>
<div class="r" style="left:2444.0px;top:1677.8px;width:1025.0px;height:76.5px;background:#18181a;"></div>
<div class="t" style="left:1315.5px;top:1700.2px;font-size:33.5px;color:#c6c6cc;font-weight:400;letter-spacing:0.92px">Instance</div>
<div class="t" style="left:2466.7px;top:1700.2px;font-size:33.5px;color:#ffffff;font-weight:400;letter-spacing:0.49px">10.203.95.12</div>
<div class="r" style="left:1294.0px;top:1754.3px;width:1150.0px;height:76.5px;background:#232326;"></div>
<div class="r" style="left:2444.0px;top:1754.3px;width:1025.0px;height:76.5px;background:#18181a;"></div>
<div class="t" style="left:1315.5px;top:1776.7px;font-size:33.5px;color:#c6c6cc;font-weight:400;letter-spacing:0.07px">Метка: .1.3.6.1.2.1.1.3.0</div>
<div class="t" style="left:2466.7px;top:1776.7px;font-size:33.5px;color:#ffffff;font-weight:400;letter-spacing:0.97px">map[seconds:4.56251904e+06 ticks:456251904]</div>
<div class="r" style="left:1294.0px;top:1830.8px;width:1150.0px;height:76.5px;background:#232326;"></div>
<div class="r" style="left:2444.0px;top:1830.8px;width:1025.0px;height:76.5px;background:#18181a;"></div>
<div class="t" style="left:1315.5px;top:1853.3px;font-size:33.5px;color:#c6c6cc;font-weight:400;letter-spacing:-0.01px">Метка: .1.3.6.1.2.1.6.13.1.1.10.203.95.12.22.10.177.113.199.23986</div>
<div class="t" style="left:2466.7px;top:1853.3px;font-size:33.5px;color:#ffffff;font-weight:400;letter-spacing:0.00px">5</div>
<div class="r" style="left:1294.0px;top:1907.4px;width:1150.0px;height:76.5px;background:#232326;"></div>
<div class="r" style="left:2444.0px;top:1907.4px;width:1025.0px;height:76.5px;background:#18181a;"></div>
<div class="t" style="left:1315.5px;top:1929.8px;font-size:33.5px;color:#c6c6cc;font-weight:400;letter-spacing:-0.07px">Метка: .1.3.6.1.4.1.9.2.9.3.1.1.1.1</div>
<div class="t" style="left:2466.7px;top:1929.8px;font-size:33.5px;color:#ffffff;font-weight:400;letter-spacing:1.37px">3554</div>
<div class="r" style="left:1294.0px;top:1983.9px;width:1150.0px;height:76.6px;background:#232326;"></div>
<div class="r" style="left:2444.0px;top:1983.9px;width:1025.0px;height:76.6px;background:#18181a;"></div>
<div class="t" style="left:1315.5px;top:2006.4px;font-size:33.5px;color:#c6c6cc;font-weight:400;letter-spacing:0.03px">Метка: .1.3.6.1.6.3.1.1.4.1.0</div>
<div class="t" style="left:2466.7px;top:2006.4px;font-size:33.5px;color:#ffffff;font-weight:400;letter-spacing:0.31px">b3hpZGI6aWVk</div>
<div class="r" style="left:1294.0px;top:2060.5px;width:1150.0px;height:76.6px;background:#232326;"></div>
<div class="r" style="left:2444.0px;top:2060.5px;width:1025.0px;height:76.6px;background:#18181a;"></div>
<div class="t" style="left:1315.5px;top:2082.9px;font-size:33.5px;color:#c6c6cc;font-weight:400;letter-spacing:0.72px">Метка: mib_name</div>
<div class="t" style="left:2466.7px;top:2082.9px;font-size:33.5px;color:#ffffff;font-weight:400;letter-spacing:0.00px">.1.3.6.1.4.1.9.0.1</div>
<div class="r" style="left:1294.0px;top:2137.1px;width:1150.0px;height:76.6px;background:#232326;"></div>
<div class="r" style="left:2444.0px;top:2137.1px;width:1025.0px;height:76.6px;background:#18181a;"></div>
<div class="t" style="left:1315.5px;top:2159.5px;font-size:33.5px;color:#c6c6cc;font-weight:400;letter-spacing:0.85px">Метка: trap_name</div>
<div class="t" style="left:2466.7px;top:2159.5px;font-size:33.5px;color:#ffffff;font-weight:400;letter-spacing:0.63px">snmpv2c</div>
<div class="r" style="left:1294.0px;top:2213.6px;width:1150.0px;height:76.6px;background:#232326;"></div>
<div class="r" style="left:2444.0px;top:2213.6px;width:1025.0px;height:76.6px;background:#18181a;"></div>
<div class="r" style="left:1294.0px;top:1293.5px;width:2175.0px;height:3.0px;background:#2d3a52;"></div>
<div class="r" style="left:1294.0px;top:1370.0px;width:2175.0px;height:3.0px;background:#2d3a52;"></div>
<div class="r" style="left:1294.0px;top:1446.6px;width:2175.0px;height:3.0px;background:#2d3a52;"></div>
<div class="r" style="left:1294.0px;top:1523.2px;width:2175.0px;height:3.0px;background:#2d3a52;"></div>
<div class="r" style="left:1294.0px;top:1599.7px;width:2175.0px;height:3.0px;background:#2d3a52;"></div>
<div class="r" style="left:1294.0px;top:1676.2px;width:2175.0px;height:3.0px;background:#2d3a52;"></div>
<div class="r" style="left:1294.0px;top:1752.8px;width:2175.0px;height:3.0px;background:#2d3a52;"></div>
<div class="r" style="left:1294.0px;top:1829.3px;width:2175.0px;height:3.0px;background:#2d3a52;"></div>
<div class="r" style="left:1294.0px;top:1905.9px;width:2175.0px;height:3.0px;background:#2d3a52;"></div>
<div class="r" style="left:1294.0px;top:1982.4px;width:2175.0px;height:3.0px;background:#2d3a52;"></div>
<div class="r" style="left:1294.0px;top:2059.0px;width:2175.0px;height:3.0px;background:#2d3a52;"></div>
<div class="r" style="left:1294.0px;top:2135.6px;width:2175.0px;height:3.0px;background:#2d3a52;"></div>
<div class="r" style="left:1294.0px;top:2212.1px;width:2175.0px;height:3.0px;background:#2d3a52;"></div>
<div class="r" style="left:1294.0px;top:2288.7px;width:2175.0px;height:3.0px;background:#2d3a52;"></div>
<div class="r" style="left:2442.5px;top:1295.0px;width:3.0px;height:938.0px;background:#2d3a52;"></div>
<div class="r" style="left:3467.5px;top:1295.0px;width:2.5px;height:938.0px;background:#34384c;"></div>
<svg class="r" style="left:3482.0px;top:955.0px;" width="20" height="12" viewBox="0 0 20 12"><path d="M10 0.5 L19 11.5 H1 Z" fill="#56658a"/></svg>
<div class="r" style="left:3486.0px;top:975.0px;width:13.0px;height:1226.0px;background:#56658a;border-radius:7px;"></div>
<div class="r" style="left:3500.5px;top:948.0px;width:2.5px;height:1285.0px;background:#3b3a58;"></div>
<svg class="r" style="left:3484.0px;top:2211.0px;" width="16" height="13" viewBox="0 0 16 13"><path d="M8 0.5 L15 6.5 L8 12.5 L1 6.5 Z" fill="#6a6898"/></svg>
<div class="t" style="left:3486.5px;top:2203.8px;font-size:18px;color:#cfcfcf;font-weight:400;letter-spacing:1.31px">Xrust.ru</div>
</div></body></html>
